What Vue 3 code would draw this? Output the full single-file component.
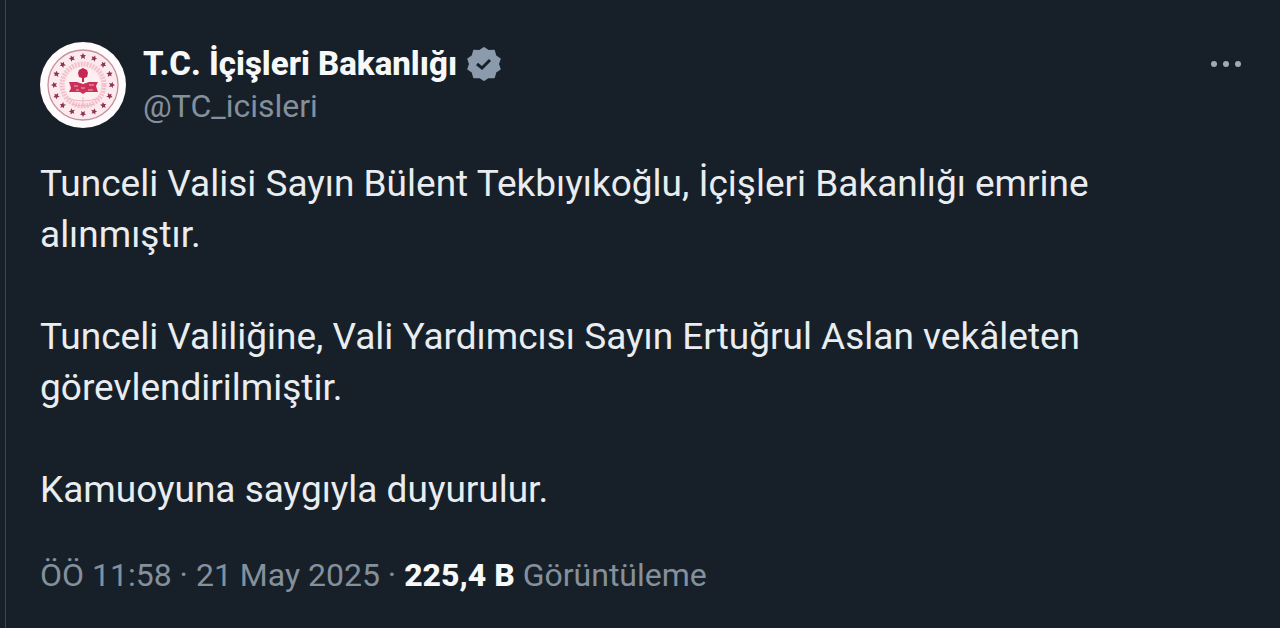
<template>
  <main class="page">
    <article class="tweet">
      <header class="tweet-header">
        <a class="avatar" href="#" :aria-label="author.name">
          <svg viewBox="0 0 86 86" aria-hidden="true">
            <circle cx="43" cy="43" r="43" fill="#fffafc" />
            <circle cx="43" cy="43" r="35" fill="#fceaef" stroke="#c6929f" stroke-width="1.3" />
            <circle cx="43" cy="43" r="21" fill="none" stroke="#f3c3cd" stroke-width="5" stroke-dasharray="2 1" />
            <circle cx="43" cy="43" r="17" fill="#fdf0f3" />
            <!-- 16 yıldız -->
            <path
              v-for="n in 16"
              :key="n"
              d="M43 11l1 2 2 .2-1.500 1.500.5 2.300-2-1.200-2 1.200.5-2.300L40 13.200l2-.2z"
              fill="#8d3553"
              :transform="`rotate(${n * 22.5} 43 43)`"
            />
            <path d="M39 28l4-2 4 2 1 3-1 4-3 1v4h-2v-4l-3-1-1-4z" fill="#c32850" />
            <path d="M29 40h8l6 2 6-2h9l-2 4 2 6H46l-3 2-3-2H29l2-4z" fill="#cb3158" />
            <path d="M34 44h4m3 2h4m4-3h5M36 48h3m9 0h5" stroke="#efadbb" stroke-width="1" />
            <path d="M27 56q16 6 32 0M32 62q11 4 22 0M43 55v9" fill="none" stroke="#edb5c0" stroke-width="1" />
          </svg>
        </a>
        <div class="author">
          <div class="name-row">
            <a class="name" href="#">{{ author.name }}</a>
            <svg class="badge" viewBox="0 0 34 34" role="img" aria-label="Onaylanmış hesap">
              <path
                d="M17 1l4.500 3 5.400-.2 1.500 5.200L32.700 12 31 17l1.700 5-4.300 3-1.500 5.200-5.400-.2L17 33l-4.500-3-5.400.2L5.600 25l-4.300-3L3 17l-1.700-5 4.300-3 1.500-5.200 5.400.2z"
                stroke-linejoin="round"
                stroke-width="2"
              />
              <path class="check" d="M10 17l5 4 8-8" />
            </svg>
          </div>
          <a class="handle" href="#">{{ author.handle }}</a>
        </div>
        <button class="more" type="button" aria-label="Daha fazla">
          <svg viewBox="0 0 32 8" aria-hidden="true">
            <circle cx="4" cy="4" r="3" />
            <circle cx="16" cy="4" r="3" />
            <circle cx="28" cy="4" r="3" />
          </svg>
        </button>
      </header>

      <div class="tweet-text">
        <p v-for="(paragraph, index) in paragraphs" :key="index">{{ paragraph }}</p>
      </div>

      <footer class="meta">
        <a class="time" href="#">ÖÖ 11:58 · 21 May 2025</a>
        <span> · </span>
        <strong>225,4 B</strong>
        <span> Görüntüleme</span>
      </footer>
    </article>
  </main>
</template>

<script setup>
const author = {
  name: 'T.C. İçişleri Bakanlığı',
  handle: '@TC_icisleri',
};

const paragraphs = [
  'Tunceli Valisi Sayın Bülent Tekbıyıkoğlu, İçişleri Bakanlığı emrine alınmıştır.',
  'Tunceli Valiliğine, Vali Yardımcısı Sayın Ertuğrul Aslan vekâleten görevlendirilmiştir.',
  'Kamuoyuna saygıyla duyurulur.',
];
</script>

<style>
body {
  margin: 0;
  background: #172029;
}
</style>

<style scoped>
.page {
  min-height: 100vh;
  padding-left: 5px;
  box-sizing: border-box;
  display: flex;
  background: #172029;
  font-family: Roboto, "Liberation Sans", sans-serif;
}

.tweet {
  flex: 1;
  min-width: 0;
  border-left: 1px solid #3b4650;
  padding: 42px 38px 28px 34px;
}

a {
  color: inherit;
  text-decoration: none;
}

.tweet-header {
  display: flex;
  align-items: flex-start;
}

.avatar {
  width: 86px;
  height: 86px;
  flex: none;
}

.avatar svg,
.badge,
.more svg {
  display: block;
}

.author {
  flex: 1;
  min-width: 0;
  margin-left: 17px;
}

.name-row {
  display: flex;
  align-items: center;
  gap: 10px;
}

.name {
  color: #f7f9f9;
  font-size: 33px;
  font-weight: 800;
  line-height: 44px;
}

.badge {
  width: 34px;
  height: 34px;
  fill: #8b9bac;
  stroke: #8b9bac;
}

.badge .check {
  fill: none;
  stroke: #172029;
  stroke-width: 3;
}

.handle {
  display: block;
  color: #84909c;
  font-size: 32px;
  line-height: 40px;
}

.more {
  padding: 18px 0;
  border: 0;
  background: none;
  cursor: pointer;
}

.more svg {
  width: 32px;
  height: 8px;
  fill: #a0aab5;
}

.tweet-text {
  margin-top: 30px;
  color: #e9edf0;
  font-size: 37px;
  font-weight: 450;
  line-height: 51px;
}

.tweet-text p {
  margin: 0 0 51px;
}

.tweet-text p:last-child {
  margin-bottom: 0;
}

.meta {
  margin-top: 36px;
  color: #84909c;
  font-size: 32px;
  line-height: 48px;
}

.meta strong {
  color: #f7f9f9;
  font-weight: 800;
}
</style>
